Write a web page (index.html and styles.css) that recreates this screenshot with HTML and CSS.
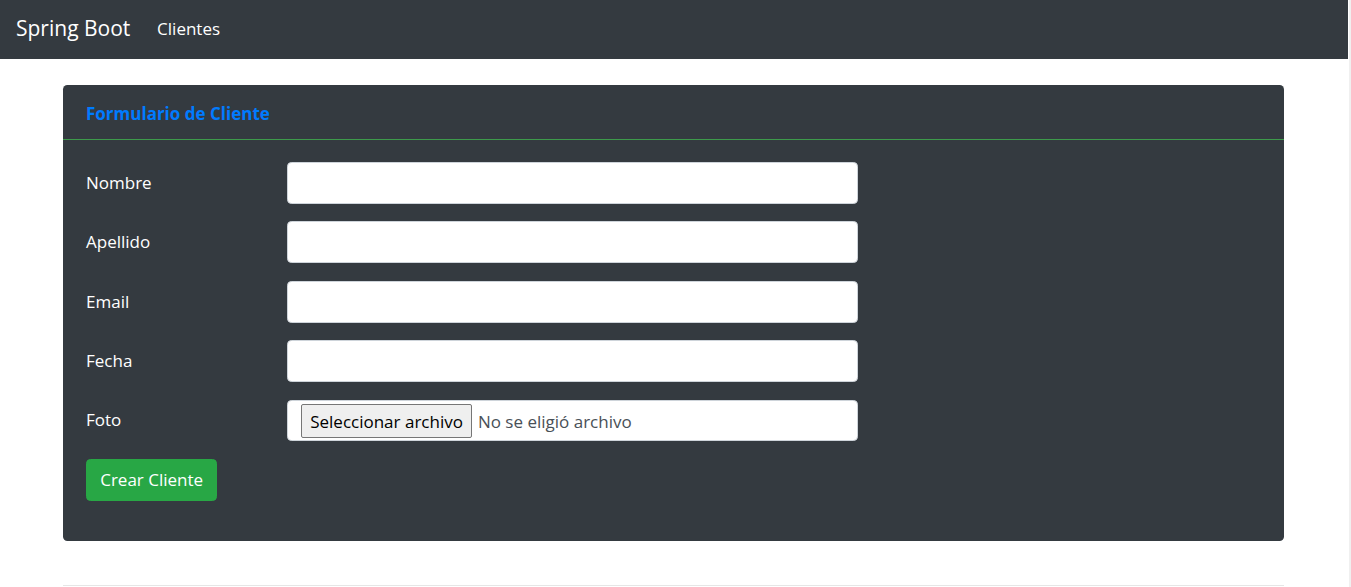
FILE: index.html
```html
<!DOCTYPE html>
<html lang="es">
<head>
<meta charset="utf-8">
<title>Spring Boot</title>
<link rel="stylesheet" href="styles.css">
</head>
<body>
<div class="page">
  <div class="main">
    <nav class="navbar">
      <a class="brand" href="#">Spring Boot</a>
      <a class="nav-link" href="#">Clientes</a>
    </nav>
    <div class="container">
      <div class="card">
        <div class="card-header">Formulario de Cliente</div>
        <div class="card-body">
          <form class="form">
            <div class="row">
              <label class="label">Nombre</label>
              <input class="form-control" type="text">
            </div>
            <div class="row">
              <label class="label">Apellido</label>
              <input class="form-control" type="text">
            </div>
            <div class="row">
              <label class="label">Email</label>
              <input class="form-control" type="text">
            </div>
            <div class="row">
              <label class="label">Fecha</label>
              <input class="form-control" type="text">
            </div>
            <div class="row">
              <label class="label">Foto</label>
              <div class="form-control file">
                <span class="file-btn">Seleccionar archivo</span>
                <span class="file-name">No se eligió archivo</span>
              </div>
            </div>
            <div class="actions">
              <button class="btn" type="button">Crear Cliente</button>
            </div>
          </form>
        </div>
      </div>
      <hr class="rule">
    </div>
  </div>
  <div class="scrollbar"></div>
</div>
</body>
</html>
```

FILE: styles.css
```css
* { box-sizing: border-box; }

html, body {
  margin: 0;
  padding: 0;
  background: #fff;
}

body {
  font-family: "Open Sans", "Noto Sans", sans-serif;
  font-size: 17px;
  color: #212529;
}

.page {
  display: flex;
  height: 587px;
  overflow: hidden;
}

.main {
  width: 1348px;
  flex: none;
}

.scrollbar {
  flex: 1;
  background: #f0f0f0;
  border-left: 1px solid #fff;
}

.navbar {
  height: 59px;
  background: #343a40;
  display: flex;
  align-items: center;
  padding: 0 16px 3px 16px;
}

.brand {
  color: #fff;
  text-decoration: none;
  font-size: 21px;
  margin-right: 18px;
}

.nav-link {
  color: #fff;
  text-decoration: none;
  font-size: 17px;
  padding: 0 8.8px;
}

.container {
  padding: 26px 64px 0 63px;
}

.card {
  background: #343a40;
  border-radius: 4.4px;
  color: #fff;
}

.card-header {
  height: 55px;
  display: flex;
  align-items: center;
  padding: 2px 22px 0 23px;
  border-bottom: 1px solid #3d9a4b;
  color: #007bff;
  font-weight: 700;
  font-size: 17px;
}

.card-body {
  padding: 22px 22px 23px 22px;
}

.row {
  display: flex;
  align-items: center;
  margin-bottom: 17.6px;
}

.label {
  width: 202px;
  flex: none;
  color: #fff;
  padding-left: 1px;
  padding-bottom: 1px;
}

.form-control {
  width: 571px;
  height: 41.8px;
  background: #fff;
  border: 1px solid #ced4da;
  border-radius: 4.4px;
  padding: 6.6px 13.2px;
  font: inherit;
  color: #495057;
}

.file {
  display: flex;
  align-items: center;
  padding: 2px 13.2px 0 13.2px;
}

.file-btn {
  display: inline-flex;
  align-items: center;
  height: 34px;
  padding: 0 8px;
  background: #efefef;
  border: 1px solid #767676;
  border-radius: 2px;
  color: #000;
}

.file-name {
  margin-left: 6px;
  color: #495057;
}

.actions {
  margin-bottom: 17.6px;
  padding-left: 1px;
}

.btn {
  height: 41.8px;
  padding: 0 13.2px 1px 13.2px;
  background: #28a745;
  border: 1px solid #28a745;
  border-radius: 4.4px;
  color: #fff;
  font: inherit;
}

.rule {
  margin: 44px 0 0 0;
  border: 0;
  border-top: 1px solid #e6e6e6;
}
```
